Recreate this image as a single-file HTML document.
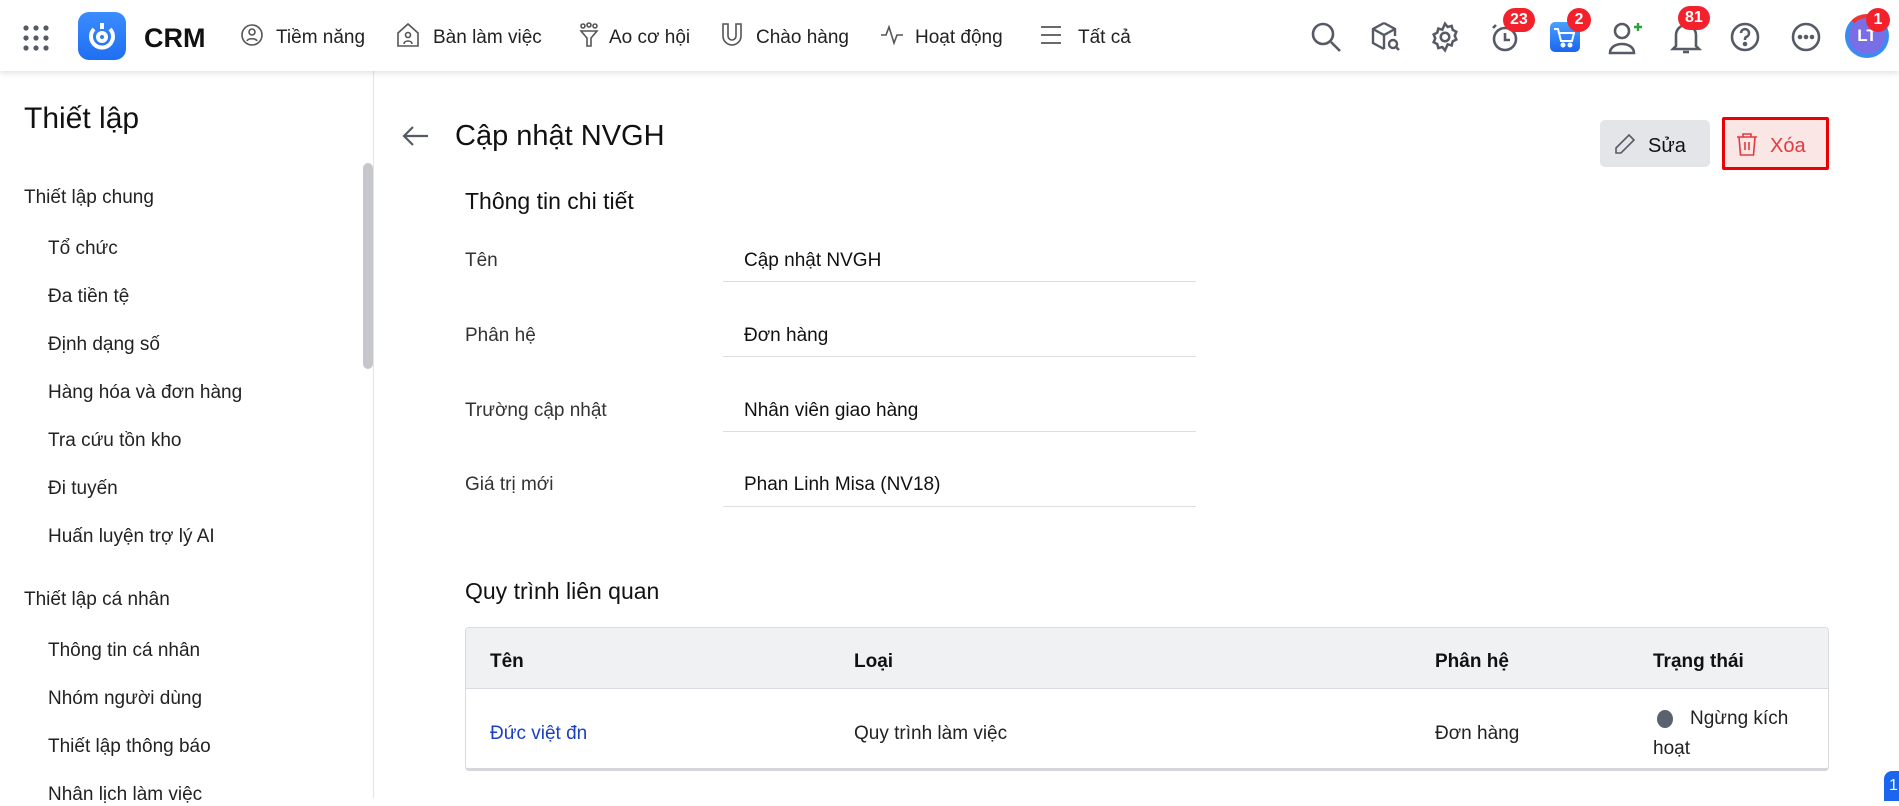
<!DOCTYPE html>
<html><head><meta charset="utf-8"><style>
*{box-sizing:border-box;margin:0;padding:0}
body{width:1899px;height:798px;overflow:hidden;background:#fff;font-family:"Liberation Sans",sans-serif;color:#1f1f1f;position:relative}
.a{position:absolute;white-space:nowrap}
.t{margin-top:3px}
.hdr{position:absolute;left:0;top:0;width:1899px;height:71px;background:#fff;box-shadow:0 2px 6px rgba(0,0,0,.12);z-index:2}
.nav{font-size:19px;color:#222;top:24px;margin-top:3px}
.ic{position:absolute;top:21px}
.badge{position:absolute;background:#f2212c;color:#fff;font-weight:bold;font-size:16px;border-radius:12px;height:24px;line-height:24px;padding:0 7px;text-align:center}
.side{position:absolute;left:0;top:71px;width:374px;height:727px;border-right:1px solid #e3e4e8}
.si{font-size:19px;color:#222;left:48px;margin-top:3px}
.sh{font-size:19px;color:#222;left:24px;margin-top:3px}
.lab{font-size:19px;color:#333;left:465px;margin-top:3px}
.val{font-size:19px;color:#111;left:744px;margin-top:3px}
.ul{position:absolute;left:723px;width:473px;height:1px;background:#dcdde1}
</style></head><body>
<div class="hdr">
 <svg class="a" style="left:22px;top:24px" width="28" height="28" viewBox="0 0 28 28" fill="#555b66"><circle cx="4" cy="4" r="2.6"/><circle cx="14" cy="4" r="2.6"/><circle cx="24" cy="4" r="2.6"/><circle cx="4" cy="14" r="2.6"/><circle cx="14" cy="14" r="2.6"/><circle cx="24" cy="14" r="2.6"/><circle cx="4" cy="24" r="2.6"/><circle cx="14" cy="24" r="2.6"/><circle cx="24" cy="24" r="2.6"/></svg>
 <div class="a" style="left:78px;top:12px;width:48px;height:48px;border-radius:11px;background:linear-gradient(180deg,#3b8cff,#1f6ff2)"></div>
 <svg class="a" style="left:84px;top:18px" width="36" height="36" viewBox="0 0 36 36" fill="none" stroke="#fff" stroke-width="4"><path d="M10 11a11 11 0 1 0 16 0"/><circle cx="18" cy="19" r="4"/><path d="M18 5v6"/></svg>
 <div class="a t" style="left:144px;top:20px;font-size:27px;font-weight:bold;color:#111">CRM</div>
 <svg class="ic" style="left:240px;top:23px" width="24" height="24" viewBox="0 0 24 24" fill="none" stroke="#555" stroke-width="1.6"><circle cx="12" cy="12" r="10"/><circle cx="12" cy="9" r="3"/><path d="M7 18c1-3 9-3 10 0"/></svg>
 <div class="a nav" style="left:276px">Tiềm năng</div>
 <svg class="ic" style="left:396px;top:22px" width="24" height="26" viewBox="0 0 24 26" fill="none" stroke="#555" stroke-width="1.6"><path d="M2 11L12 2l10 9v13H2z"/><circle cx="12" cy="13" r="2.5"/><path d="M8 22c0-4 8-4 8 0"/></svg>
 <div class="a nav" style="left:433px">Bàn làm việc</div>
 <svg class="ic" style="left:578px;top:22px" width="22" height="26" viewBox="0 0 22 26" fill="none" stroke="#555" stroke-width="1.6"><circle cx="5" cy="4" r="2"/><circle cx="11" cy="3" r="2"/><circle cx="17" cy="4" r="2"/><path d="M3 9h16l-6 7v8h-4v-8z"/></svg>
 <div class="a nav" style="left:609px">Ao cơ hội</div>
 <svg class="ic" style="left:720px;top:22px" width="24" height="26" viewBox="0 0 24 26" fill="none" stroke="#555" stroke-width="1.6"><path d="M3 2h5v12a4 4 0 0 0 8 0V2h5v12a9 9 0 0 1-18 0z"/></svg>
 <div class="a nav" style="left:756px">Chào hàng</div>
 <svg class="ic" style="left:880px;top:24px" width="24" height="22" viewBox="0 0 24 22" fill="none" stroke="#555" stroke-width="1.6"><path d="M1 11h5l3-8 5 16 3-8h6"/></svg>
 <div class="a nav" style="left:915px">Hoạt động</div>
 <svg class="ic" style="left:1040px;top:25px" width="22" height="20" viewBox="0 0 22 20" stroke="#555" stroke-width="1.8"><path d="M1 2h20M1 10h20M1 18h20"/></svg>
 <div class="a nav" style="left:1078px">Tất cả</div>

 <svg class="ic" style="left:1310px" width="32" height="32" viewBox="0 0 32 32" fill="none" stroke="#555b66" stroke-width="2.6"><circle cx="13" cy="13" r="10"/><path d="M21 21l9 9"/></svg>
 <svg class="ic" style="left:1370px" width="32" height="32" viewBox="0 0 32 32" fill="none" stroke="#555b66" stroke-width="2.4"><path d="M14 2l11 6v7M14 2L3 8v14l11 6M3 8l11 6 11-6M14 14v14"/><circle cx="23" cy="23" r="4"/><path d="M26 26l3 3"/></svg>
 <svg class="ic" style="left:1429px" width="32" height="32" viewBox="0 0 24 24" fill="none" stroke="#555b66" stroke-width="1.9"><circle cx="12" cy="12" r="3.2"/><path d="M12 2l2 2.5 3-.8.8 3 2.7 1.4-1.2 2.9 1.2 2.9-2.7 1.4-.8 3-3-.8L12 22l-2-2.5-3 .8-.8-3L3.5 15.9 4.7 13 3.5 10.1 6.2 8.7 7 5.7l3 .8z"/></svg>
 <svg class="ic" style="left:1490px" width="32" height="32" viewBox="0 0 32 32" fill="none" stroke="#555b66" stroke-width="2.6"><circle cx="15" cy="18" r="11"/><path d="M15 12v7h5M6 4l-3 3"/></svg>
 <div class="badge" style="left:1503px;top:8px">23</div>
 <div class="a" style="left:1550px;top:22px;width:30px;height:30px;border-radius:5px;background:linear-gradient(#4aa0ff,#1a66ee)"></div>
 <svg class="a" style="left:1553px;top:27px" width="24" height="22" viewBox="0 0 24 22" fill="none" stroke="#fff" stroke-width="2"><path d="M1 2h4l3 12h11l2-8H7"/><circle cx="10" cy="18" r="1.5" fill="#fff"/><circle cx="17" cy="18" r="1.5" fill="#fff"/></svg>
 <div class="badge" style="left:1567px;top:8px;border-radius:50%;width:24px;padding:0">2</div>
 <svg class="ic" style="left:1608px" width="36" height="34" viewBox="0 0 36 34" fill="none" stroke="#555b66" stroke-width="2.6"><circle cx="14" cy="10" r="7"/><path d="M2 32c0-12 24-12 24 0z"/><path d="M30 2v8M26 6h8" stroke="#2aa33a" stroke-width="2.4"/></svg>
 <svg class="ic" style="left:1670px" width="32" height="34" viewBox="0 0 32 34" fill="none" stroke="#555b66" stroke-width="2.6"><path d="M6 25V14a10 10 0 0 1 20 0v11l3 3H3z"/><path d="M13 31h6"/></svg>
 <div class="badge" style="left:1678px;top:6px">81</div>
 <svg class="ic" style="left:1729px" width="32" height="32" viewBox="0 0 32 32" fill="none" stroke="#555b66" stroke-width="2.6"><circle cx="16" cy="16" r="13"/><path d="M12 12a4 4 0 1 1 5 4c-1 .5-1 1.5-1 3"/><circle cx="16" cy="23" r="1" fill="#555b66"/></svg>
 <svg class="ic" style="left:1790px" width="32" height="32" viewBox="0 0 32 32" fill="none" stroke="#555b66" stroke-width="2.6"><circle cx="16" cy="16" r="13"/><circle cx="10" cy="16" r="1" fill="#555b66"/><circle cx="16" cy="16" r="1" fill="#555b66"/><circle cx="22" cy="16" r="1" fill="#555b66"/></svg>
 <div class="a" style="left:1845px;top:14px;width:44px;height:44px;border-radius:50%;border:4px solid #3a8cf0;border-top-color:#e33;background:#7a6ee6;color:#fff;font-weight:bold;font-size:17px;text-align:center;line-height:36px">LT</div>
 <div class="badge" style="left:1866px;top:8px;border-radius:50%;width:24px;padding:0">1</div>
</div>

<div class="side">
 <div class="a t" style="left:24px;top:28px;font-size:30px;color:#111">Thiết lập</div>
 <div class="a" style="left:363px;top:92px;width:10px;height:206px;border-radius:5px;background:#c5c7cd"></div>
 <div class="a sh" style="top:113px">Thiết lập chung</div>
 <div class="a si" style="top:164px">Tổ chức</div>
 <div class="a si" style="top:212px">Đa tiền tệ</div>
 <div class="a si" style="top:260px">Định dạng số</div>
 <div class="a si" style="top:308px">Hàng hóa và đơn hàng</div>
 <div class="a si" style="top:356px">Tra cứu tồn kho</div>
 <div class="a si" style="top:404px">Đi tuyến</div>
 <div class="a si" style="top:452px">Huấn luyện trợ lý AI</div>
 <div class="a sh" style="top:515px">Thiết lập cá nhân</div>
 <div class="a si" style="top:566px">Thông tin cá nhân</div>
 <div class="a si" style="top:614px">Nhóm người dùng</div>
 <div class="a si" style="top:662px">Thiết lập thông báo</div>
 <div class="a si" style="top:710px">Nhân lịch làm việc</div>
</div>

<svg class="a" style="left:402px;top:125px" width="28" height="22" viewBox="0 0 28 22" fill="none" stroke="#555b66" stroke-width="2.2"><path d="M26 11H3M11 2l-9 9 9 9"/></svg>
<div class="a t" style="left:455px;top:117px;font-size:29px;color:#111">Cập nhật NVGH</div>
<div class="a" style="left:1600px;top:120px;width:110px;height:47px;border-radius:5px;background:#e4e5e9"></div>
<svg class="a" style="left:1614px;top:133px" width="22" height="22" viewBox="0 0 22 22" fill="none" stroke="#555b66" stroke-width="1.6"><path d="M15 2l5 5L7 20H2v-5z"/></svg>
<div class="a t" style="left:1648px;top:132px;font-size:20px;color:#111">Sửa</div>
<div class="a" style="left:1722px;top:117px;width:107px;height:53px;border:3px solid #ee0000;border-radius:2px;background:#fbe6e6"></div>
<svg class="a" style="left:1736px;top:132px" width="22" height="25" viewBox="0 0 22 25" fill="none" stroke="#e6393e" stroke-width="1.6"><path d="M1 5h20M7 5V2h8v3M3 5l1.5 18h13L19 5M9 10v8M13 10v8"/></svg>
<div class="a t" style="left:1770px;top:132px;font-size:20px;color:#e6393e">Xóa</div>

<div class="a t" style="left:465px;top:185px;font-size:23px;color:#111">Thông tin chi tiết</div>
<div class="a lab" style="top:247px">Tên</div><div class="a val" style="top:247px">Cập nhật NVGH</div><div class="ul" style="top:281px"></div>
<div class="a lab" style="top:322px">Phân hệ</div><div class="a val" style="top:322px">Đơn hàng</div><div class="ul" style="top:356px"></div>
<div class="a lab" style="top:397px">Trường cập nhật</div><div class="a val" style="top:397px">Nhân viên giao hàng</div><div class="ul" style="top:431px"></div>
<div class="a lab" style="top:471px">Giá trị mới</div><div class="a val" style="top:471px">Phan Linh Misa (NV18)</div><div class="ul" style="top:506px"></div>

<div class="a t" style="left:465px;top:575px;font-size:23px;color:#111">Quy trình liên quan</div>
<div class="a" style="left:465px;top:627px;width:1364px;height:144px;border:1px solid #d9dbe0;border-bottom:3px solid #d4d6db;border-radius:4px;overflow:hidden">
 <div class="a" style="left:0;top:0;width:1364px;height:61px;background:#f0f1f3;border-bottom:1px solid #d9dbe0"></div>
 <div class="a t" style="left:24px;top:20px;font-size:19px;font-weight:bold;color:#111">Tên</div>
 <div class="a t" style="left:388px;top:20px;font-size:19px;font-weight:bold;color:#111">Loại</div>
 <div class="a t" style="left:969px;top:20px;font-size:19px;font-weight:bold;color:#111">Phân hệ</div>
 <div class="a t" style="left:1187px;top:20px;font-size:19px;font-weight:bold;color:#111">Trạng thái</div>
 <div class="a t" style="left:24px;top:92px;font-size:19px;color:#1a3fc2">Đức việt đn</div>
 <div class="a t" style="left:388px;top:92px;font-size:19px;color:#222">Quy trình làm việc</div>
 <div class="a t" style="left:969px;top:92px;font-size:19px;color:#222">Đơn hàng</div>
 <div class="a" style="left:1191px;top:82px;width:16px;height:18px;border-radius:50%;background:#5a6270"></div>
 <div class="a t" style="left:1224px;top:77px;font-size:19px;color:#222">Ngừng kích</div>
 <div class="a t" style="left:1187px;top:107px;font-size:19px;color:#222">hoạt</div>
</div>
<div class="a" style="left:1884px;top:771px;width:20px;height:30px;border-radius:8px 0 0 0;background:#1a66ee;color:#fff;font-size:16px;padding:6px 0 0 5px">1</div>
</body></html>
